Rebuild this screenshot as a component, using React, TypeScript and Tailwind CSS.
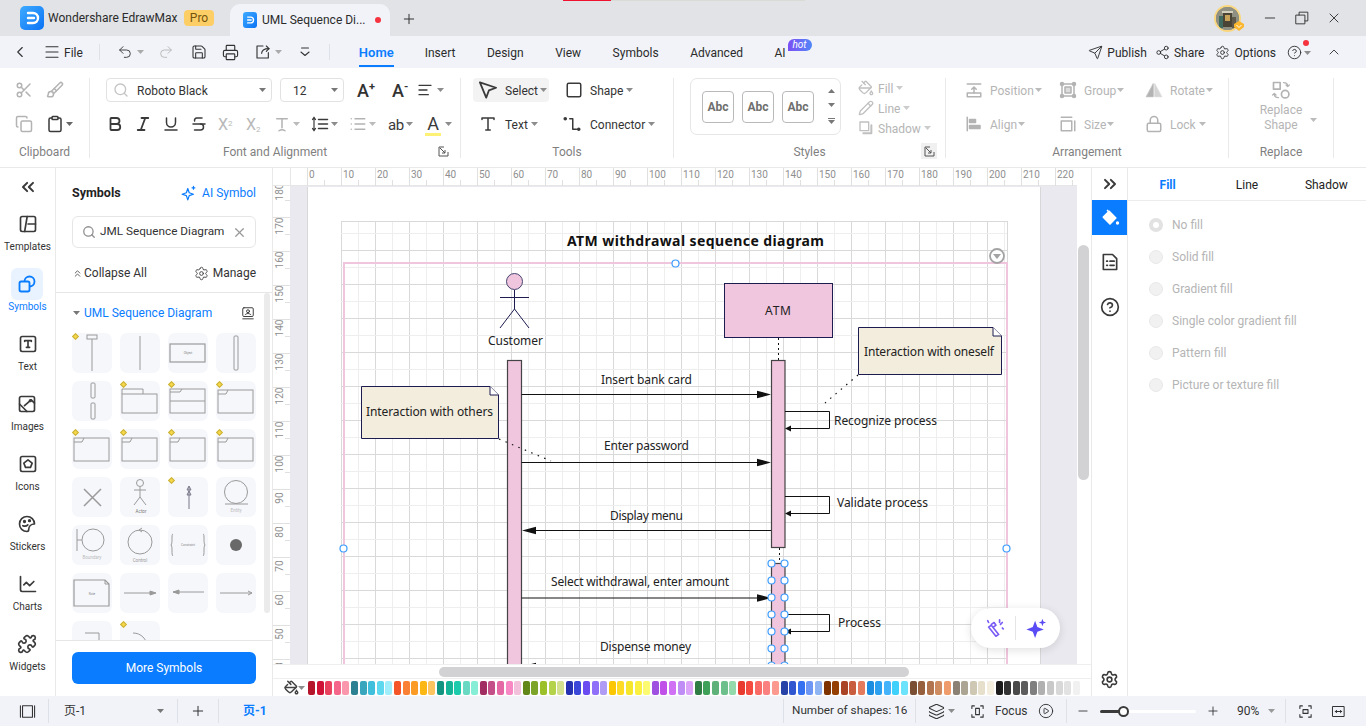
import React from "react";
import { Bold, Italic, Underline, Strikethrough, ChevronLeft, Menu, Plus, Minus, X, Undo2, Redo2, Save, Printer, Send, Share2, Settings, CircleHelp, ChevronUp, Scissors, Brush, Copy, Clipboard, AlignLeft, List, Square, PaintBucket, Lock, Search, ChevronsLeft, ChevronsRight, ChevronsUp, Puzzle, ChartLine, Layers, CirclePlay, Pencil } from "lucide-react";

const FONT = "font-['Roboto','Noto_Sans_CJK_SC',sans-serif]";

const Caret = ({ c = "#8c8c8c", className = "" }: { c?: string; className?: string }) => (
  <svg width="7" height="4" viewBox="0 0 7 4" className={"shrink-0 " + className}><path d="M0 0h7L3.5 4z" fill={c} /></svg>
);

const Sep = ({ className = "" }: { className?: string }) => <div className={"w-px h-[24px] bg-[#dfe1e8] shrink-0 " + className} />;

const Svg = ({ s = 18, vb = "0 0 24 24", c = "#3a3a3a", w = 2, children, className = "" }: any) => (
  <svg width={s} height={s} viewBox={vb} fill="none" stroke={c} strokeWidth={w} strokeLinecap="round" strokeLinejoin="round" className={"shrink-0 " + className}>{children}</svg>
);

const Logo = ({ s, r }: { s: string; r: string }) => (
  <div className={"flex items-center justify-center bg-gradient-to-br from-[#3eaaff] to-[#0a72f5] shrink-0 " + s + " " + r}>
    <svg viewBox="0 0 24 24" className="w-full h-full" fill="none" stroke="#fff" strokeWidth="2.4" strokeLinecap="round"><path d="M8 7h5a5 5 0 0 1 0 10H8" /><path d="M8 12h6" /></svg>
  </div>
);

function TitleBar() {
  return (
    <div className="relative flex h-[36px] bg-[#e1e3e6] shrink-0">
      <div className="absolute top-0 left-[563px] w-[48px] h-px bg-[#f01030]" />
      <div className="absolute top-0 left-[611px] w-[194px] h-px bg-[#d8dcd4]" />
      <div className="flex items-center w-[230px] pl-[20px]">
        <Logo s="w-[24px] h-[24px]" r="rounded-[5px]" />
        <span className="ml-[4px] w-[136px] text-[12px] text-[#2b2b2b] whitespace-nowrap">Wondershare EdrawMax</span>
        <span className="w-[30px] h-[16px] rounded-[4px] bg-[#fdcd66] text-[#73540f] text-[12px] leading-[16px] text-center">Pro</span>
      </div>
      <div className="mt-[4px] w-[160px] h-[32px] rounded-t-[10px] bg-[#f1f3f9] flex items-center pl-[13px]">
        <Logo s="w-[14px] h-[16px]" r="rounded-[3px]" />
        <span className="ml-[5px] w-[113px] text-[12px] text-[#2b2b2b] whitespace-nowrap">UML Sequence Di...</span>
        <span className="w-[6px] h-[6px] rounded-full bg-[#f5333f]" />
      </div>
      <Plus size={16} color="#333" className="ml-[11px] mt-[11px]" strokeWidth={1.5} />
      <div className="ml-auto flex items-center">
        <div className="relative w-[27px] h-[27px] rounded-full border-[2px] border-[#fad77f] bg-[#8a8a7c] overflow-visible">
          <svg viewBox="0 0 23 23" className="w-full h-full rounded-full"><rect width="23" height="23" fill="#8f8f82" /><rect x="7" y="6" width="9" height="14" fill="#4a4436" /><rect x="9" y="8" width="5" height="6" fill="#c9a25a" /><rect x="3" y="9" width="4" height="12" fill="#3f6a60" /><rect x="16" y="10" width="4" height="11" fill="#5f5a4c" /><rect x="6" y="4" width="11" height="2" fill="#d3cfbc" /></svg>
          <svg viewBox="0 0 12 12" className="absolute w-[12px] h-[12px] left-[17px] top-[13px]"><path d="M1 4l5-3 5 3v3l-5 4-5-4z" fill="#fbb72e" /><path d="M3.5 5L6 7.500 8.500 5" stroke="#fff" fill="none" /></svg>
        </div>
        <Minus size={16} color="#333" className="ml-[21px]" strokeWidth={1.4} />
        <Svg s={14} c="#333" w={1.6} className="ml-[17px]"><rect x="2" y="7" width="15" height="15" /><path d="M7 7V2h15v15h-5" /></Svg>
        <X size={16} color="#333" className="ml-[17px] mr-[24px]" strokeWidth={1.4} />
      </div>
    </div>
  );
}

function MenuBar() {
  const tabs = ["Insert", "Design", "View", "Symbols", "Advanced"];
  return (
    <div className="flex items-center h-[32px] bg-[#f1f3f9] shrink-0 text-[12px] text-[#2b2b2b] [&_span]:translate-y-[1px]">
      <ChevronLeft size={18} color="#333" strokeWidth={1.5} className="ml-[11px]" />
      <Menu size={18} color="#333" strokeWidth={1.5} className="ml-[14px]" />
      <span className="ml-[3px]">File</span>
      <Sep className="ml-[16px] !h-[16px]" />
      <Undo2 size={16} color="#444" strokeWidth={1.5} className="ml-[17px]" />
      <Caret className="ml-[4px]" c="#aaa" />
      <Redo2 size={16} color="#bbb" strokeWidth={1.5} className="ml-[14px]" />
      <Save size={16} color="#333" strokeWidth={1.6} className="ml-[17px]" />
      <Printer size={17} color="#333" strokeWidth={1.6} className="ml-[15px]" />
      <Svg s={16} c="#333" w={1.7} className="ml-[16px]"><path d="M12 3H3v18h17v-8" /><path d="M10 14c0-4 3-7 11-7" /><path d="M17 3l4 4-4 4" /></Svg>
      <Caret className="ml-[4px]" c="#aaa" />
      <Svg s={14} c="#333" w={1.8} className="ml-[16px]"><path d="M6 5h12" /><path d="M5 12l7 6 7-6" /></Svg>
      <Sep className="ml-[17px] !h-[16px]" />
      <div className="ml-[29px] relative h-full flex items-center font-semibold text-[#0a7cff] text-[13px]">
        <span>Home</span>
        <div className="absolute left-0 right-0 bottom-[1px] h-[2px] bg-[#0a7cff]" />
      </div>
      <div className="ml-[31px] flex items-center gap-[31.5px]">
        {tabs.map((t) => <span key={t}>{t}</span>)}
        <span className="relative">AI
          <span className="absolute left-[13px] top-[-6px] w-[24px] h-[12px] rounded-[6px] rounded-bl-none bg-gradient-to-r from-[#7a4df5] to-[#4d86f7] text-white text-[10px] leading-[12px] text-center italic">hot</span>
        </span>
      </div>
      <div className="ml-auto flex items-center pr-[24px]">
        <Send size={15} color="#333" strokeWidth={1.5} />
        <span className="ml-[4px]">Publish</span>
        <Share2 size={15} color="#333" strokeWidth={1.5} className="ml-[8px]" />
        <span className="ml-[4px]">Share</span>
        <Settings size={15} color="#333" strokeWidth={1.5} className="ml-[11px]" />
        <span className="ml-[4px]">Options</span>
        <div className="relative ml-[11px] flex items-center">
          <CircleHelp size={15} color="#333" strokeWidth={1.5} />
          <span className="absolute left-[16px] top-[-6px] w-[6px] h-[6px] rounded-full bg-[#f5333f]" />
          <Caret className="ml-[2px] mt-[1px]" />
        </div>
        <ChevronUp size={16} color="#444" strokeWidth={1.5} className="ml-[15px]" />
      </div>
    </div>
  );
}

const Label = ({ children, corner }: { children: string; corner?: string }) => (
  <div className="relative mt-[7px] h-[16px] pt-[1px] text-center text-[12px] leading-[16px] text-[#7f7f7f]">
    {children}
    {corner && (
      <span className={"absolute top-0 w-[16px] h-[16px] flex items-center justify-center " + corner}>
        <svg width="11" height="11" viewBox="0 0 11 11" fill="none" stroke="#555" strokeWidth="1"><path d="M10 6V10H1V1H6" /><path d="M2 2l5 5M7 4v3H4" /></svg>
      </span>
    )}
  </div>
);

const Group = ({ w, children, label, corner }: any) => (
  <div className={"shrink-0 h-[80px] border-r border-[#e9e9e9] " + w}>
    <div className="h-[58px] [&_span]:translate-y-[1px]">{children}</div>
    <Label corner={corner}>{label}</Label>
  </div>
);

const Row = ({ children, className = "" }: any) => <div className={"flex items-center h-[24px] " + className}>{children}</div>;

const GRAY = "#b3b3b3";

function Ribbon() {
  return (
    <div className="flex h-[100px] pt-[10px] bg-white border-b border-[#e9e9e9] shrink-0 text-[12px] text-[#333]">
      <Group w="w-[90px]" label="Clipboard">
        <Row className="pl-[15px] gap-[13px]"><Scissors size={18} color={GRAY} /><Brush size={18} color={GRAY} /></Row>
        <Row className="pl-[15px] mt-[10px]"><Copy size={18} color={GRAY} /><Clipboard size={18} color="#3a3a3a" className="ml-[13px]" /><Caret className="ml-[2px]" c="#666" /></Row>
      </Group>
      <Group w="w-[371px]" label="Font and Alignment" corner="right-[9px]">
        <Row className="pl-[16px]">
          <div className="w-[166px] h-[24px] border border-[#e2e2e2] rounded-[4px] flex items-center pl-[6px] pr-[5px]">
            <Search size={16} color="#c4c4c4" />
            <span className="ml-[8px] flex-1">Roboto Black</span>
            <Caret c="#777" />
          </div>
          <div className="ml-[8px] w-[64px] h-[24px] border border-[#e2e2e2] rounded-[4px] flex items-center pl-[12px] pr-[5px]">
            <span className="flex-1">12</span><Caret c="#777" />
          </div>
          <span className="relative w-[38px] text-center text-[18px] leading-[24px] font-medium">A<span className="absolute top-[-5px] left-[25px] text-[11px] font-bold">+</span></span>
          <span className="relative w-[32px] text-center text-[18px] leading-[24px] font-medium">A<span className="absolute top-[-5px] left-[22px] text-[11px] font-bold">-</span></span>
          <AlignLeft size={16} color="#3a3a3a" className="ml-[3px]" /><Caret className="ml-[4px]" />
        </Row>
        <Row className="pl-[16px] mt-[10px]">
          <Bold size={18} color="#3a3a3a" strokeWidth={2.4} />
          <Italic size={18} color="#3a3a3a" strokeWidth={2.4} className="ml-[10px]" />
          <Underline size={18} color="#3a3a3a" className="ml-[10px]" />
          <Strikethrough size={18} color="#3a3a3a" className="ml-[10px]" />
          <span className="ml-[10px] w-[18px] text-[#b9b9b9] text-[16px] leading-[20px]">X<sup className="text-[8px]">2</sup></span>
          <span className="ml-[10px] w-[18px] text-[#b9b9b9] text-[16px] leading-[20px]">X<sub className="text-[8px]">2</sub></span>
          <Svg s={18} c={GRAY} className="ml-[9px]"><path d="M5 5h14M12 5v12M8 21c3-2 5-2 8 0" /></Svg>
          <Caret className="ml-[2px]" c="#bbb" />
          <Svg s={18} c="#3a3a3a" className="ml-[11px]"><path d="M10 6h12M10 12h12M10 18h12" /><path d="M4 4v16M2 6l2-3 2 3M2 18l2 3 2-3" strokeWidth="1.6" /></Svg>
          <Caret className="ml-[2px]" />
          <List size={18} color={GRAY} className="ml-[11px]" />
          <Caret className="ml-[2px]" c="#bbb" />
          <span className="ml-[12px] w-[16px] text-[15px] leading-[20px] tracking-[-0.5px] text-[#3a3a3a]">ab</span>
          <Caret className="ml-[2px]" />
          <span className="ml-[12px] w-[16px] h-[22px] relative text-[18px] leading-[20px] text-center text-[#3a3a3a]">A<span className="absolute left-0 right-0 bottom-[1px] h-[3px] bg-[#fff176]" /></span>
          <Caret className="ml-[4px]" />
        </Row>
      </Group>
      <Group w="w-[213px]" label="Tools">
        <Row className="pl-[12px]">
          <div className="w-[76px] h-[24px] rounded-[4px] bg-[#f3f3f3] flex items-center pl-[6px]">
            <Svg s={18} vb="2 3 20 19" c="#3a3a3a"><path d="M3 4l18 6-8 3-3 8z" /></Svg>
            <span className="ml-[8px]">Select</span><Caret className="ml-[2px]" />
          </div>
          <Square size={18} color="#3a3a3a" className="ml-[16px]" />
          <span className="ml-[7px]">Shape</span><Caret className="ml-[3px]" />
        </Row>
        <Row className="pl-[12px] mt-[10px]">
          <div className="w-[76px] flex items-center pl-[6px]">
            <Svg s={18} c="#3a3a3a"><path d="M4 6V4h16v2M12 4v16M9 20h6" /></Svg>
            <span className="ml-[8px]">Text</span><Caret className="ml-[3px]" />
          </div>
          <Svg s={18} c="#3a3a3a" className="ml-[14px]"><circle cx="3" cy="5" r="1.4" fill="#3a3a3a" /><circle cx="21" cy="19" r="1.4" fill="#3a3a3a" /><path d="M9 5h4v14h5" /></Svg>
          <span className="ml-[9px]">Connector</span><Caret className="ml-[3px]" />
        </Row>
      </Group>
      <Group w="w-[272px]" label="Styles" corner="right-[8px] bg-[#f0f0f0]">
        <div className="flex pl-[16px]">
          <div className="w-[151px] h-[57px] border border-[#e6e6e6] rounded-[7px] flex items-center pl-[11px]">
            {[0, 1, 2].map((i) => (
              <div key={i} className="w-[32px] h-[32px] mr-[8px] border border-[#b9b9b9] rounded-[4px] flex items-center justify-center text-[12px] font-bold text-[#6e6e6e]">Abc</div>
            ))}
            <div className="ml-[6px] h-full flex flex-col items-center justify-around py-[5px]">
              <Caret c="#777" className="rotate-180" /><Caret c="#777" />
              <svg width="7" height="6" viewBox="0 0 7 6"><path d="M0 0h7v1H0zM0 2h7L3.500 6z" fill="#777" /></svg>
            </div>
          </div>
          <div className="ml-[17px] text-[#b5b5b5]">
            <div className="flex items-center h-[20px]"><PaintBucket size={16} color="#c0c0c0" /><span className="ml-[4px]">Fill</span><Caret className="ml-[3px]" c="#ccc" /></div>
            <div className="flex items-center h-[20px]"><Pencil size={16} color="#c0c0c0" /><span className="ml-[4px]">Line</span><Caret className="ml-[3px]" c="#ccc" /></div>
            <div className="flex items-center h-[20px]"><Svg s={16} c="#c0c0c0"><rect x="3" y="3" width="13" height="13" /><path d="M20 8v12H8" strokeWidth="3" /></Svg><span className="ml-[4px]">Shadow</span><Caret className="ml-[3px]" c="#ccc" /></div>
          </div>
        </div>
      </Group>
      <Group w="w-[283px]" label="Arrangement">
        <Row className="pl-[19px] text-[#b5b5b5]">
          <div className="w-[94px] flex items-center">
            <Svg s={18} c={GRAY}><path d="M3 4h18M12 8v8M9 11l3-3 3 3" /><rect x="3" y="16" width="18" height="5" /></Svg>
            <span className="ml-[7px]">Position</span><Caret className="ml-[1px]" c="#bbb" />
          </div>
          <div className="w-[86px] flex items-center">
            <Svg s={18} c={GRAY}><rect x="4" y="4" width="16" height="16" /><rect x="8" y="8" width="8" height="8" fill="#ddd" /><circle cx="4" cy="4" r="2" fill={GRAY} /><circle cx="20" cy="4" r="2" fill={GRAY} /><circle cx="4" cy="20" r="2" fill={GRAY} /><circle cx="20" cy="20" r="2" fill={GRAY} /></Svg>
            <span className="ml-[7px]">Group</span><Caret className="ml-[1px]" c="#bbb" />
          </div>
          <div className="flex items-center">
            <Svg s={18} c={GRAY} w={1}><path d="M11 4v17H2z" fill={GRAY} /><path d="M13 4v17h9z" fill="#d4d4d4" stroke="#d4d4d4" /></Svg>
            <span className="ml-[7px]">Rotate</span><Caret className="ml-[1px]" c="#bbb" />
          </div>
        </Row>
        <Row className="pl-[19px] mt-[10px] text-[#b5b5b5]">
          <div className="w-[94px] flex items-center">
            <Svg s={18} c={GRAY}><path d="M3 3v18" /><rect x="6" y="6" width="8" height="4" fill={GRAY} /><rect x="6" y="14" width="14" height="4" fill={GRAY} /></Svg>
            <span className="ml-[7px]">Align</span><Caret className="ml-[1px]" c="#bbb" />
          </div>
          <div className="w-[86px] flex items-center">
            <Svg s={18} c={GRAY}><path d="M3 3h14" /><rect x="3" y="8" width="14" height="13" /><path d="M21 8v13" /></Svg>
            <span className="ml-[7px]">Size</span><Caret className="ml-[1px]" c="#bbb" />
          </div>
          <div className="flex items-center">
            <Lock size={18} color={GRAY} />
            <span className="ml-[7px]">Lock</span><Caret className="ml-[3px]" c="#bbb" />
          </div>
        </Row>
      </Group>
      <Group w="w-[105px]" label="Replace">
        <div className="relative flex flex-col items-center text-[#b5b5b5] leading-[15px] text-center">
          <Svg s={20} c={GRAY} className="mt-[2px] mb-[2px]"><rect x="3" y="3" width="8" height="8" /><circle cx="17" cy="17" r="4.500" /><path d="M15 3c3 0 5 1 5 4M18 6l2 2 2-2M9 21c-3 0-5-1-5-4M6 18l-2-2-2 2" strokeWidth="1.500" /></Svg>
          <span>Replace</span>
          <span>Shape</span>
          <Caret className="absolute left-[81px] top-[40px]" c="#bbb" />
        </div>
      </Group>
    </div>
  );
}

const Nav = ({ label, active, children, className = "" }: any) => (
  <div className={"flex flex-col items-center h-[60px] " + className}>
    <div className={"w-[32px] h-[32px] flex items-center justify-center rounded-[6px] " + (active ? "bg-[#e8f3ff]" : "")}>{children}</div>
    <span className={"text-[10px] leading-[13px] whitespace-nowrap " + (active ? "text-[#0a7cff]" : "text-[#333]")}>{label}</span>
  </div>
);

function LeftNav() {
  return (
    <div className="w-[56px] shrink-0 border-r border-[#e9e9e9] flex flex-col items-center">
      <ChevronsLeft size={20} color="#3a3a3a" strokeWidth={2.4} className="mt-[9px] mb-[11px]" />
      <Nav label="Templates"><Svg s={20}><rect x="3" y="3" width="18" height="18" rx="2" /><path d="M11 3L8 21M12 12h9" /></Svg></Nav>
      <Nav label="Symbols" active><Svg s={20} c="#0a7cff" w={2.2}><circle cx="15" cy="9" r="6" /><rect x="3" y="9" width="12" height="12" rx="2" fill="#e8f3ff" /></Svg></Nav>
      <Nav label="Text"><Svg s={20}><rect x="3" y="3" width="18" height="18" rx="2" /><path d="M8 9V8h8v1M12 8v8M10 16h4" /></Svg></Nav>
      <Nav label="Images"><Svg s={20}><rect x="3" y="3" width="18" height="18" rx="2" /><path d="M3 12l9 9M9 14l8-7 4 4" /><circle cx="16" cy="8" r="1" fill="#3a3a3a" /></Svg></Nav>
      <Nav label="Icons"><Svg s={20}><rect x="3" y="3" width="18" height="18" rx="2" /><path d="M12 7l5 4-2 5H9l-2-5z" /></Svg></Nav>
      <Nav label="Stickers"><Svg s={20}><path d="M21 12a9 9 0 1 0-9 9c1 0 2 0 2-2 0-4 3-7 7-7z" /><circle cx="9" cy="9" r="1" fill="#3a3a3a" /><circle cx="15" cy="8" r="1" fill="#3a3a3a" /><path d="M7 14c2 1 4 1 6-1" /></Svg></Nav>
      <Nav label="Charts"><ChartLine size={20} color="#3a3a3a" /></Nav>
      <Nav label="Widgets"><Puzzle size={20} color="#3a3a3a" /></Nav>
    </div>
  );
}

const S = "#9a9a9a";
const tiles: { d?: boolean; g: React.ReactNode }[] = [
  { d: true, g: <><rect x="15" y="2" width="10" height="4" /><path d="M20 6v32" /></> },
  { g: <path d="M20 3v34" /> },
  { g: <><rect x="2" y="11" width="35" height="18" strokeWidth="1.200" /><text x="20" y="21" fontSize="3" textAnchor="middle" fill="#888" stroke="none">Object</text></> },
  { g: <rect x="18" y="3" width="4" height="34" rx="1" /> },
  { g: <><rect x="19" y="2" width="4" height="15" rx="1" /><rect x="19" y="22" width="4" height="16" rx="1" /></> },
  { d: true, g: <><path d="M2 13V8h21v5" /><rect x="2" y="13" width="35" height="19" /></> },
  { d: true, g: <><rect x="2" y="8" width="35" height="24" /><path d="M2 20h35M2 11h10l2-3" /></> },
  { d: true, g: <><rect x="2" y="9" width="35" height="23" /><path d="M2 13h8l2-4" /></> },
  { d: true, g: <><rect x="2" y="9" width="35" height="23" /><path d="M2 13h8l2-4" /></> },
  { d: true, g: <><rect x="2" y="9" width="35" height="23" /><path d="M2 13h8l2-4" /></> },
  { d: true, g: <><rect x="2" y="9" width="35" height="23" /><path d="M2 13h8l2-4" /></> },
  { d: true, g: <><rect x="2" y="9" width="35" height="23" /><path d="M2 13h8l2-4" /></> },
  { g: <path d="M12 12l17 17M29 12L12 29" strokeWidth="1.500" /> },
  { g: <><circle cx="20" cy="6" r="3.500" /><path d="M20 10v10M14 13h12M20 20l-6 8M20 20l6 8" /><text x="21" y="36" fontSize="4.500" textAnchor="middle" fill="#777" stroke="none">Actor</text></> },
  { d: true, g: <><path d="M21 10v22" stroke="#778" /><path d="M19 13l2-4 2 4zM19 18l2-4 2 4z" stroke="#778" /></> },
  { g: <><circle cx="20" cy="15" r="11.500" /><path d="M9 27h23" /><text x="20" y="35" fontSize="4.500" textAnchor="middle" fill="#bbb" stroke="none">Entity</text></> },
  { g: <><circle cx="21" cy="15" r="11" /><path d="M10 15H5M5 4v22" /><text x="20" y="34" fontSize="4.500" textAnchor="middle" fill="#bbb" stroke="none">Boundary</text></> },
  { g: <><circle cx="20" cy="17" r="12" /><path d="M19 5l3-2M19 5l3 2" /><text x="20" y="37" fontSize="4.500" textAnchor="middle" fill="#999" stroke="none">Control</text></> },
  { g: <><path d="M5 9c-2 0 0 9-2 11 2 2 0 10 2 11M35 9c2 0 0 9 2 11-2 2 0 10-2 11" /><text x="20" y="21" fontSize="3" textAnchor="middle" fill="#888" stroke="none">Constraint</text></> },
  { g: <circle cx="20" cy="20" r="6" fill="#696969" stroke="none" /> },
  { g: <><path d="M2 7h31l4 4v22H2z" strokeWidth="1.200" /><path d="M33 7v4h4" /><text x="20" y="22" fontSize="3" textAnchor="middle" fill="#888" stroke="none">Note</text></> },
  { g: <><path d="M4 20h30" /><path d="M30 18l6 2-6 2z" fill={S} /></> },
  { g: <><path d="M5 19h31" /><path d="M11 17l-6 2 6 2z" fill={S} /></> },
  { g: <><path d="M4 20h32" /><path d="M32 18l4 2-4 2" /></> },
  { g: <path d="M13 12h14v20" /> },
  { d: true, g: <path d="M13 12c8 0 14 6 14 14" /> },
];

function Symbols() {
  return (
    <div className="w-[217px] shrink-0 border-r border-[#e9e9e9] flex flex-col text-[12px] text-[#333]">
      <div className="flex items-center justify-between px-[16px] h-[48px] pt-[2px]">
        <span className="font-bold text-[12.5px] text-[#222]">Symbols</span>
        <span className="flex items-center text-[#0a7cff]">
          <Svg s={17} c="#0a7cff" w={1.7}><path d="M11 5l2 6 6 2-6 2-2 6-2-6-6-2 6-2zM19 2v4M17 4h4" /></Svg>
          <span className="ml-[5px]">AI Symbol</span>
        </span>
      </div>
      <div className="mx-[16px] h-[32px] border border-[#e6e6e6] rounded-[6px] flex items-center pl-[9px] pr-[8px]">
        <Search size={14} color="#8f8f8f" strokeWidth={2.2} />
        <span className="ml-[4px] flex-1 whitespace-nowrap text-[11.75px]">JML Sequence Diagram</span>
        <X size={15} color="#999" />
      </div>
      <div className="flex items-center px-[16px] h-[44px] pt-[6px]">
        <ChevronsUp size={11} color="#555" />
        <span className="ml-[1px]">Collapse All</span>
        <Settings size={15} color="#444" strokeWidth={1.5} className="ml-auto" />
        <span className="ml-[4px]">Manage</span>
      </div>
      <div className="relative h-[348px] border-t border-[#e6e6e6] overflow-hidden">
        <div className="absolute left-[208px] top-0 w-[6px] h-[320px] rounded-[3px] bg-[#ebebeb]" />
        <div className="flex items-center h-[40px] pl-[17px] pr-[16px]">
          <Caret c="#777" />
          <span className="ml-[4px] text-[#0a7cff]">UML Sequence Diagram</span>
          <Svg s={14} c="#333" w={1.6} className="ml-auto mr-[1px]"><rect x="3" y="3" width="18" height="15" rx="2" /><circle cx="12" cy="9" r="2.500" /><path d="M7 15c2-3 8-3 10 0M3 22h18" /></Svg>
        </div>
        <div className="grid grid-cols-[40px_40px_40px_40px] gap-[8px] pl-[16px]">
          {tiles.map((t, i) => (
            <div key={i} className="relative w-[40px] h-[40px] rounded-[7px] bg-[#f6f7fb]">
              <svg viewBox="0 0 40 40" className="w-full h-full" fill="none" stroke={S} strokeWidth="1">{t.g}</svg>
              {t.d && <span className="absolute left-[1px] top-[1px] w-[5px] h-[5px] rotate-45 bg-[#f7d84a] border border-[#c9b23c]" />}
            </div>
          ))}
        </div>
      </div>
      <div className="flex-1 border-t border-[#e6e6e6] px-[16px] pt-[11px]">
        <div className="h-[32px] rounded-[6px] bg-[#0a7cff] text-white text-center leading-[33px]">More Symbols</div>
      </div>
    </div>
  );
}

function TopRuler() {
  const ticks = Array.from({ length: 23 }, (_, i) => i);
  return (
    <div className="h-[18px] flex shrink-0">
      <svg width="804" height="18" viewBox="273 168 804 18" className="block">
        <rect x="273" y="168" width="804" height="18" fill="#fff" />
        <path d="M273 185.500H1077M290.500 168V186" stroke="#e6e6e6" />
        {ticks.map((i) => {
          const x = 307 + 34 * i;
          return (
            <g key={i}>
              <path d={`M${x + 0.5} 168V186`} stroke="#e0e0e0" />
              <path d={`M${x + 17.5} 180V186`} stroke="#e0e0e0" />
              <text x={x + 2} y="178" fontSize="10" fill="#8f8f8f">{i * 10}</text>
            </g>
          );
        })}
      </svg>
    </div>
  );
}

function LeftRuler() {
  const vals = [180, 170, 160, 150, 140, 130, 120, 110, 100, 90, 80, 70, 60, 50, 40];
  return (
    <svg width="17" height="478" viewBox="273 186 17 478" className="block shrink-0">
      <rect x="273" y="186" width="17" height="478" fill="#fff" />
      {vals.map((v, i) => {
        const y = 183 + 34 * i;
        return (
          <g key={v}>
            <path d={`M273 ${y + 0.5}H290`} stroke="#e0e0e0" />
            <path d={`M285 ${y + 17.5}H290`} stroke="#e0e0e0" />
            <text transform={`translate(283 ${y + 9}) rotate(-90)`} fontSize="10" textAnchor="middle" fill="#8f8f8f">{v}</text>
          </g>
        );
      })}
    </svg>
  );
}

const Txt = ({ x, y, w, children, b, c = "#222", fs = 12 }: any) => (
  <text x={x} y={y - 1} textLength={w} fontFamily="'Noto Sans',sans-serif" fontSize={fs} fontWeight={b ? 700 : 400} fill={c} dominantBaseline="central">{children}</text>
);

const Handle = ({ x, y }: { x: number; y: number }) => <circle cx={x} cy={y} r="3.500" fill="#fff" stroke="#3b9cff" strokeWidth="1.200" />;

const Pink = "#f0c5de";
const Navy = "#1c1c50";

function Msg({ y, right = true }: { y: number; right?: boolean }) {
  return right ? (
    <g>
      <path d={`M521.500 ${y}H760`} stroke="#111" strokeWidth="1.200" />
      <path d={`M757 ${y - 3.8}L771 ${y}L757 ${y + 3.8}z`} fill="#111" />
    </g>
  ) : (
    <g>
      <path d={`M532 ${y}H771`} stroke="#111" strokeWidth="1.200" />
      <path d={`M536 ${y - 3.8}L522 ${y}L536 ${y + 3.8}z`} fill="#111" />
    </g>
  );
}

function Self({ y }: { y: number }) {
  return (
    <g>
      <path d={`M785 ${y}H829.500V${y + 17}H788`} stroke="#111" fill="none" />
      <path d={`M791 ${y + 14}L785 ${y + 17}L791 ${y + 20}z`} fill="#111" />
    </g>
  );
}

function Diagram() {
  const vx: number[] = [];
  for (let i = 0; i <= 39; i++) vx.push(341 + 17 * i);
  const hy: number[] = [];
  for (let i = 0; i <= 26; i++) hy.push(233 + 17 * i);
  return (
    <svg width="787" height="478" viewBox="290 186 787 478" className="absolute inset-0 block">
      <g shapeRendering="crispEdges">
        {vx.map((x, i) => <path key={x} d={`M${x + 0.5} 221V664`} stroke={i % 2 ? "#eeeeee" : "#d9d9d9"} />)}
        {hy.map((y, i) => <path key={y} d={`M341 ${y + 0.5}H1007`} stroke={i % 2 ? "#d9d9d9" : "#eeeeee"} />)}
        <path d="M341 221.500H1007.500V664" stroke="#d9d9d9" fill="none" />
      </g>
      <path d="M344 664V263H1007V664" stroke={Pink} strokeWidth="2" fill="none" />
      <Txt x={567} y={241} w={257} b fs={14} c="#111">ATM withdrawal sequence diagram</Txt>
      <circle cx="997" cy="256" r="7" fill="#fff" stroke="#a3a3a3" strokeWidth="1.800" />
      <path d="M993 254h8l-4 5z" fill="#a3a3a3" />
      <circle cx="514.500" cy="281.500" r="8" fill={Pink} stroke="#44446e" />
      <path d="M500 297.500H529M514.500 290V309L500 328M514.500 309L529 328" stroke={Navy} fill="none" />
      <Txt x={488} y={341} w={55}>Customer</Txt>
      <rect x="507.500" y="360.500" width="14" height="320" fill={Pink} stroke="#444" strokeWidth="1.200" />
      <rect x="724.500" y="283.500" width="108" height="54" fill={Pink} stroke={Navy} />
      <Txt x={765} y={311} w={26}>ATM</Txt>
      <path d="M778.500 338V360M779.500 548V563" stroke="#111" strokeDasharray="2 3" />
      <rect x="771.500" y="360.500" width="13.500" height="187" fill={Pink} stroke="#444" strokeWidth="1.200" />
      <rect x="771.500" y="563.500" width="13.500" height="110" fill={Pink} stroke="#444" strokeWidth="1.200" />
      <Msg y={394.5} />
      <Msg y={462.5} />
      <Msg y={530.5} right={false} />
      <Msg y={598} />
      <Msg y={666.5} right={false} />
      <Self y={411.5} />
      <Self y={496.5} />
      <Self y={614.5} />
      <Txt x={601} y={380} w={91}>Insert bank card</Txt>
      <Txt x={604} y={446} w={85}>Enter password</Txt>
      <Txt x={610} y={516} w={73}>Display menu</Txt>
      <Txt x={551} y={582} w={178}>Select withdrawal, enter amount</Txt>
      <Txt x={600} y={647} w={91}>Dispense money</Txt>
      <Txt x={834} y={421} w={103}>Recognize process</Txt>
      <Txt x={837} y={503} w={91}>Validate process</Txt>
      <Txt x={838} y={623} w={43}>Process</Txt>
      <path d="M361.500 386.500H490L498.500 395V438.500H361.500z" fill="#f3eddd" stroke={Navy} />
      <path d="M490 386.500V395H498.500" fill="#fff" stroke={Navy} />
      <Txt x={366} y={412} w={127}>Interaction with others</Txt>
      <path d="M858.500 327.500H993L1001.500 336V374.500H858.500z" fill="#f3eddd" stroke={Navy} />
      <path d="M993 327.500V336H1001.500" fill="#fff" stroke={Navy} />
      <Txt x={864} y={352} w={130}>Interaction with oneself</Txt>
      <path d="M499 439L551 461M858 375L825 403" stroke="#111" strokeWidth="1.200" strokeDasharray="1.500 5.500" />
      <Handle x={675.5} y={263.5} />
      <Handle x={343.5} y={548.5} />
      <Handle x={1006.5} y={548.5} />
      {[563.5, 580.5, 597.5, 614.5, 631.5, 648.5, 665.5].map((y) => (
        <g key={y}><Handle x={771.5} y={y} /><Handle x={784.5} y={y} /></g>
      ))}
    </svg>
  );
}

const colors = "#b5152b #cf1336 #e8425f #f4678a #fb97ad #2b8091 #3aa6bd #3fbfdc #5dd8ee #a0eefc #f4562a #fa8036 #fb9a25 #fdb714 #fec45f #129480 #16b497 #1ccbab #6ad9c4 #86eed6 #a02c62 #c44e88 #e468a4 #f888c4 #f2c0da #62881a #7ca428 #9cc02a #b4d24a #d3e08f #2531b0 #3a47d8 #6a4cf0 #9070f8 #b09cf4 #fcc700 #ffdb26 #f5e62b #fbf040 #fcfa70 #a050e0 #c050e8 #d070f5 #c08cf5 #dca4f8 #2f7d44 #3fa05a #5fb17a #6dc08b #94d9ac #e83a2e #f54a3f #fa6b67 #fb8080 #fc9a90 #2743a8 #3057d0 #3570f0 #6d96f5 #8fb4f3 #7e3300 #954000 #a94426 #c85d3f #e27a5b #1a8de0 #2ba0f0 #45b2fc #3fd0fc #6ce3fd #7a4f33 #96603f #b2744f #cf8b60 #f09b6b #8a8074 #ada593 #cdc7b3 #e5dfcc #f3eedd #1b1b1b #333333 #4a4a4a #5d5d5d #7f7f7f #b0b0b0 #c8c8c8 #d8d8d8 #e2e2e2 #f1f1f1 #ffffff".split(" ");

function Center() {
  return (
    <div className="w-[818px] shrink-0 flex flex-col">
      <div className="flex h-[496px]">
        <div className="w-[804px] flex flex-col">
          <TopRuler />
          <div className="flex h-[478px]">
            <LeftRuler />
            <div className="relative w-[787px] h-[478px] bg-[#e9e9ef] overflow-hidden">
              <div className="ml-[17px] mt-[1px] w-[734px] h-full bg-white border-x border-[#d8d8d8]" />
              <Diagram />
              <div className="absolute left-[681px] top-[422px] w-[89px] h-[40px] rounded-[20px] bg-white shadow-[0_2px_10px_rgba(0,0,0,0.12)] flex items-center">
                <Svg s={22} c="#7a5cf5" w={1.8} className="ml-[13px]"><path d="M5 11l8 10 3-2-8-10zM8 8l3-2 2 3-3 2" /><path d="M17 3v3M20 6l-2 2M4 4l1 2M20 12l1 1" /></Svg>
                <div className="ml-[9px] w-px h-[24px] bg-[#e5e5e5]" />
                <svg width="22" height="22" viewBox="0 0 24 24" className="ml-[9px]"><path d="M11 4l2.500 7 7 2.500-7 2.500-2.500 7-2.500-7-7-2.500 7-2.500z" fill="#5a4cf5" /><path d="M19 2l1 3 3 1-3 1-1 3-1-3-3-1 3-1z" fill="#5a4cf5" /></svg>
              </div>
            </div>
          </div>
        </div>
        <div className="w-[14px] pt-[77px] pl-[1px]">
          <div className="w-[11px] h-[235px] rounded-[6px] bg-[#d2d2d4]" />
        </div>
      </div>
      <div className="h-[15px] border-y border-[#eeeeee] pl-[166px] pt-[2px]">
        <div className="w-[470px] h-[10px] rounded-[5px] bg-[#d2d2d4]" />
      </div>
      <div className="flex items-center h-[17px] pl-[11px]">
        <PaintBucket size={15} color="#444" strokeWidth={2.4} />
        <Caret className="ml-[-1px] mr-[3px]" />
        <div className="flex gap-[1.6px]">
          {colors.map((c, i) => <div key={i} className="w-[7px] h-[14px] rounded-[2px]" style={{ background: c }} />)}
        </div>
      </div>
    </div>
  );
}

function Rail() {
  return (
    <div className="w-[37px] shrink-0 border-x border-[#e9e9e9] flex flex-col items-center">
      <ChevronsRight size={20} color="#3a3a3a" strokeWidth={2.4} className="mt-[6px] mb-[6px]" />
      <div className="w-full h-[35px] bg-[#0a7cff] flex items-center justify-center">
        <Svg s={20} c="#fff" w={2}><path d="M4 11l7-7 8 8-7 7z" fill="#fff" /><path d="M9 3l3 3" /><circle cx="21" cy="18" r="1" fill="#fff" /></Svg>
      </div>
      <Svg s={20} className="mt-[17px]"><path d="M4 3h11l5 5v13H4z" /><path d="M8 11h1M12 11h5M8 16h1M12 16h5" /></Svg>
      <CircleHelp size={20} color="#3a3a3a" className="mt-[25px]" />
      <Settings size={19} color="#3a3a3a" className="mt-auto mb-[7px]" />
    </div>
  );
}

function RightPanel() {
  const opts = ["No fill", "Solid fill", "Gradient fill", "Single color gradient fill", "Pattern fill", "Picture or texture fill"];
  return (
    <div className="flex-1 flex flex-col text-[12px]">
      <div className="flex h-[33px] pt-[2px] border-b border-[#ececec] items-center text-center text-[#222]">
        <span className="flex-1 font-bold text-[#0a7cff]">Fill</span>
        <span className="flex-1">Line</span>
        <span className="flex-1">Shadow</span>
      </div>
      <div className="pl-[21px] pt-[17px] flex flex-col gap-[18px]">
        {opts.map((o, i) => (
          <div key={o} className="flex items-center h-[14px]">
            <span className={"w-[14px] h-[14px] rounded-full flex items-center justify-center " + (i === 0 ? "bg-[#e2e2e2]" : "bg-[#f1f1f1] border border-[#e9e9e9]")}>
              {i === 0 && <span className="w-[6px] h-[6px] rounded-full bg-white" />}
            </span>
            <span className="ml-[9px] text-[#b5b5b5]">{o}</span>
          </div>
        ))}
      </div>
    </div>
  );
}

function Status() {
  return (
    <div className="flex items-center h-[30px] bg-[#f1f3f9] shrink-0 text-[12px] text-[#333]">
      <Svg s={17} c="#333" w={1.5} className="ml-[19px]"><rect x="5" y="4" width="14" height="16" /><path d="M2 4v16M22 4v16" /></Svg>
      <Sep className="ml-[12px]" />
      <div className="ml-[15px] w-[100px] flex items-center justify-between"><span>页-1</span><Caret c="#777" /></div>
      <Sep className="ml-[13px]" />
      <Plus size={16} color="#333" strokeWidth={1.5} className="ml-[12px]" />
      <Sep className="ml-[12px]" />
      <span className="ml-[24px] font-bold text-[#0a7cff]">页-1</span>
      <div className="ml-auto flex items-center pr-[20px]">
        <Sep className="mr-[8px]" />
        <span className="w-[115px] whitespace-nowrap text-[11.75px]">Number of shapes: 16</span>
        <Sep className="ml-[8px]" />
        <Layers size={17} color="#333" strokeWidth={1.5} className="ml-[12px]" />
        <Caret className="ml-[3px]" />
        <Svg s={15} c="#333" w={1.7} className="ml-[15px]"><path d="M3 7V3h4M17 3h4v4M21 17v4h-4M7 21H3v-4" /><rect x="9" y="7" width="6" height="10" /></Svg>
        <span className="ml-[10px] w-[31px]">Focus</span>
        <CirclePlay size={16} color="#333" strokeWidth={1.4} className="ml-[12px]" />
        <Sep className="ml-[12px]" />
        <Minus size={14} color="#333" strokeWidth={1.5} className="ml-[9px]" />
        <div className="relative ml-[10px] w-[96px] h-[3px] bg-white rounded-full">
          <div className="w-[23px] h-[3px] bg-[#3a3a3a] rounded-full" />
          <div className="absolute left-[18px] top-[-4px] w-[11px] h-[11px] rounded-full bg-white border-[2px] border-[#3a3a3a]" />
        </div>
        <Plus size={14} color="#333" strokeWidth={1.5} className="ml-[10px]" />
        <span className="ml-[17px] w-[22px]">90%</span>
        <Caret c="#999" className="ml-[9px]" />
        <Sep className="ml-[10px]" />
        <Svg s={15} c="#333" w={1.7} className="ml-[12px]"><path d="M3 7V3h4M17 3h4v4M21 17v4h-4M7 21H3v-4" /><rect x="8" y="9" width="8" height="6" /></Svg>
        <Svg s={15} c="#333" w={1.6} className="ml-[18px]"><rect x="3" y="4" width="18" height="16" /><path d="M7 12h10M9 10l-2 2 2 2M15 10l2 2-2 2" /></Svg>
      </div>
    </div>
  );
}

export default function App() {
  return (
    <div className={"w-[1366px] h-[726px] overflow-hidden flex flex-col bg-white " + FONT}>
      <TitleBar />
      <MenuBar />
      <Ribbon />
      <div className="flex h-[528px]">
        <LeftNav />
        <Symbols />
        <Center />
        <Rail />
        <RightPanel />
      </div>
      <Status />
    </div>
  );
}
